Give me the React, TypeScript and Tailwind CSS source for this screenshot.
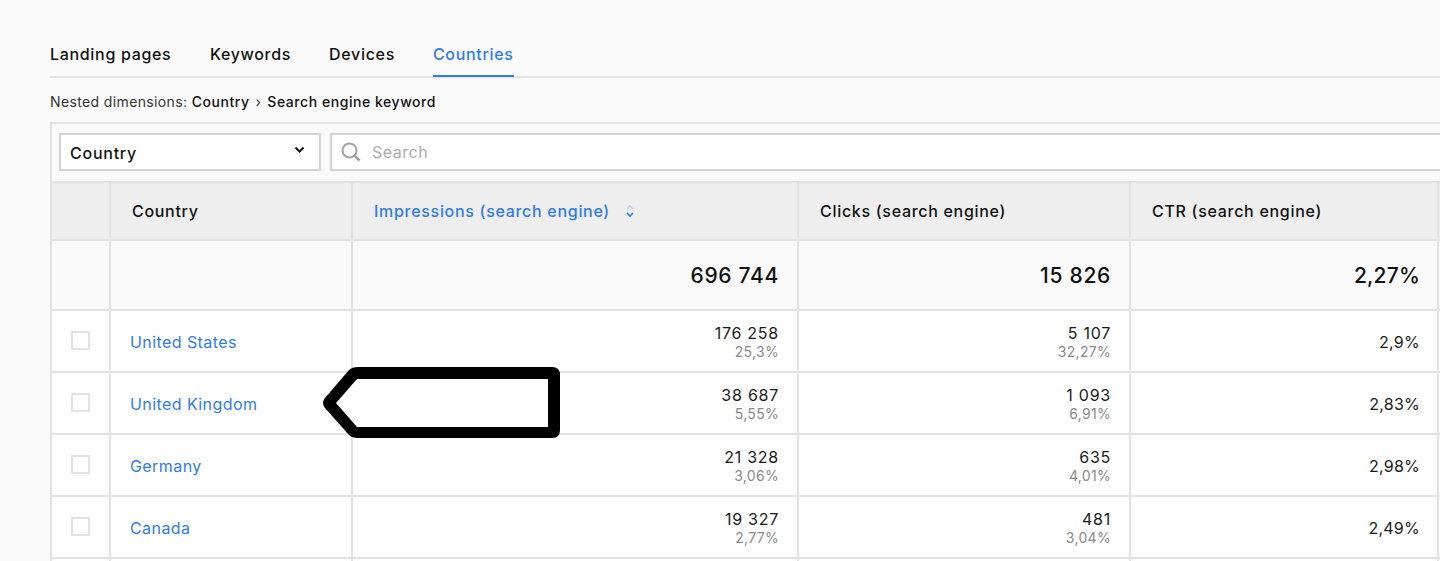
import React from "react";

const rows = [
  ["United States", "176 258", "25,3%", "5 107", "32,27%", "2,9%"],
  ["United Kingdom", "38 687", "5,55%", "1 093", "6,91%", "2,83%"],
  ["Germany", "21 328", "3,06%", "635", "4,01%", "2,98%"],
  ["Canada", "19 327", "2,77%", "481", "3,04%", "2,49%"],
];

const cols = "grid grid-cols-[59px_242px_446px_332px_308px_2px]";
const cell = "border-r-2 border-[#e2e2e2]";

function Row({ r }: { r: string[] }) {
  return (
    <div className={`${cols} h-[62px] border-b-2 border-[#e2e2e2] bg-white`}>
      <div className={`${cell} flex pl-[19px] pt-[20px]`}>
        <div className="w-[19px] h-[19px] border-2 border-[#e2e2e2] bg-white" />
      </div>
      <div className={`${cell} pl-[19px] pt-[21px] text-[16px] leading-[20px] tracking-[0.42px] text-[#2f7bea]`}>{r[0]}</div>
      <div className={`${cell} pr-[18px] pt-[12px] text-right`}>
        <div className="text-[16px] leading-[20px] tracking-[0.75px] text-[#1a1a1a]">{r[1]}</div>
        <div className="text-[14px] leading-[17px] tracking-[0.3px] text-[#8a8a8a]">{r[2]}</div>
      </div>
      <div className={`${cell} pr-[18px] pt-[12px] text-right`}>
        <div className="text-[16px] leading-[20px] tracking-[0.75px] text-[#1a1a1a]">{r[3]}</div>
        <div className="text-[14px] leading-[17px] tracking-[0.3px] text-[#8a8a8a]">{r[4]}</div>
      </div>
      <div className={`${cell} pr-[17px] pt-[21px] text-right text-[16px] leading-[20px] tracking-[0.25px] text-[#1a1a1a]`}>{r[5]}</div>
      <div />
    </div>
  );
}

export default function App() {
  return (
    <div className="relative w-[1440px] h-[561px] overflow-hidden bg-[#fafafa] font-['Inter',sans-serif] text-[#111]">
      <div className="pl-[50px]">
        <div className="flex gap-[38px] h-[78px] pt-[43px] border-b-2 border-[#e2e2e2] text-[16px] leading-[22px] font-medium tracking-[0.68px]">
          <span className="mr-[0.5px]">Landing pages</span>
          <span>Keywords</span>
          <span>Devices</span>
          <span className="relative text-[#2f7bea]">
            Countries
            <span className="absolute left-0 right-0 top-[32px] h-[2px] bg-[#2f7bea]" />
          </span>
        </div>
        <div className="h-[44px] pt-[15px] text-[14px] leading-[18px] tracking-[0.37px] text-[#333]">
          Nested dimensions: <span className="font-medium tracking-[0.55px] text-[#111]">Country</span>
          <span className="mx-[6px] text-[#333]">›</span>
          <span className="font-medium tracking-[0.55px] text-[#111]">Search engine keyword</span>
        </div>
        <div className="w-[1400px] border-l-2 border-t-2 border-[#e2e2e2]">
          <div className="flex h-[57px] gap-[9px] pl-[7px] pt-[9px]">
            <div className="flex shrink-0 items-center justify-between w-[262px] h-[38px] border-2 border-[#d4d4d4] bg-white pl-[9px] pr-[14px]">
              <span className="pt-[2px] text-[16px] font-medium tracking-[0.75px]">Country</span>
              <svg width="11" height="8" viewBox="0 0 11 8" className="mb-[4px]"><path d="M1.5 1.5 5.5 5.5 9.5 1.5" fill="none" stroke="#111" strokeWidth="2" /></svg>
            </div>
            <div className="flex shrink-0 items-center w-[1200px] h-[38px] border-2 border-[#d4d4d4] bg-white pl-[9px] gap-[11px]">
              <svg width="20" height="20" viewBox="0 0 20 20"><circle cx="8.5" cy="8.5" r="7" fill="none" stroke="#a3a3a3" strokeWidth="2" /><path d="M13.5 13.5 18.5 18.5" stroke="#a3a3a3" strokeWidth="2.5" /></svg>
              <span className="text-[16px] tracking-[0.5px] text-[#ababab]">Search</span>
            </div>
          </div>
          <div className={`${cols} h-[60px] border-y-2 border-[#e2e2e2] bg-[#eeeeee] text-[16px] font-medium tracking-[0.7px]`}>
            <div className={cell} />
            <div className={`${cell} flex items-center pl-[21px]`}>Country</div>
            <div className={`${cell} flex items-center pl-[21px] text-[#2f7bea]`}>
              Impressions (search engine)
              <svg width="10" height="14" viewBox="0 0 10 14" className="ml-[15px]">
                <path d="M2 5 5 2 8 5" fill="none" stroke="#b9d2f5" strokeWidth="1.4" />
                <path d="M2 9 5 12 8 9" fill="none" stroke="#2f7bea" strokeWidth="1.6" />
              </svg>
            </div>
            <div className={`${cell} flex items-center pl-[21px]`}>Clicks (search engine)</div>
            <div className={`${cell} flex items-center pl-[21px]`}>CTR (search engine)</div>
            <div />
          </div>
          <div className={`${cols} h-[70px] border-b-2 border-[#e2e2e2] text-[21px] font-medium tracking-[0.7px]`}>
            <div className={cell} />
            <div className={cell} />
            <div className={`${cell} flex items-center justify-end pr-[18px] pt-[2px]`}>696 744</div>
            <div className={`${cell} flex items-center justify-end pr-[18px] pt-[2px]`}>15 826</div>
            <div className={`${cell} flex items-center justify-end pr-[17px] pt-[2px] tracking-[0.2px]`}>2,27%</div>
            <div />
          </div>
          {rows.map((r) => <Row key={r[0]} r={r} />)}
          <div className={`${cols} h-[20px] bg-white`}>
            <div className={cell} /><div className={cell} /><div className={cell} /><div className={cell} /><div className={cell} /><div />
          </div>
        </div>
      </div>
      <svg className="absolute left-[320px] top-[364px]" width="244" height="78" viewBox="0 0 244 78">
        <path d="M38 3 H232 Q240 3 240 11 V66 Q240 74 232 74 H38 Q32 74 29 71 L5 44 Q1 39 5 34 L29 6 Q32 3 38 3 Z" fill="#000" />
        <path d="M37 15 H228 V63 H37 L16 39 Z" fill="#fff" />
      </svg>
    </div>
  );
}
